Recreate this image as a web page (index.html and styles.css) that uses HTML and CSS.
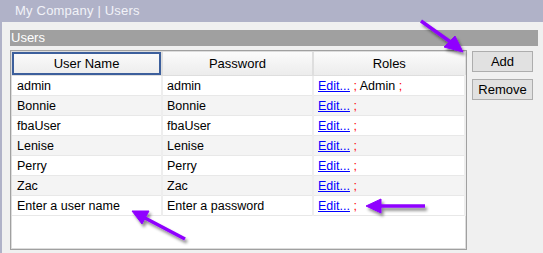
FILE: index.html
```html
<!DOCTYPE html>
<html>
<head>
    <title>My Company | Users</title>
    <link rel="stylesheet" href="styles.css">
</head>
<body>
    <div class="titlebar">My Company | Users</div>
    <div class="main">
        <div class="panel-title">Users</div>
        <div class="content">
            <div class="grid">
                <table>
                    <tr>
                        <th class="selected">User Name</th>
                        <th>Password</th>
                        <th>Roles</th>
                    </tr>
                    <tr>
                        <td>admin</td>
                        <td>admin</td>
                        <td><a href="#">Edit...</a> <span class="sep">;</span> Admin <span class="sep">;</span></td>
                    </tr>
                    <tr class="alt">
                        <td>Bonnie</td>
                        <td>Bonnie</td>
                        <td><a href="#">Edit...</a> <span class="sep">;</span></td>
                    </tr>
                    <tr>
                        <td>fbaUser</td>
                        <td>fbaUser</td>
                        <td><a href="#">Edit...</a> <span class="sep">;</span></td>
                    </tr>
                    <tr class="alt">
                        <td>Lenise</td>
                        <td>Lenise</td>
                        <td><a href="#">Edit...</a> <span class="sep">;</span></td>
                    </tr>
                    <tr>
                        <td>Perry</td>
                        <td>Perry</td>
                        <td><a href="#">Edit...</a> <span class="sep">;</span></td>
                    </tr>
                    <tr class="alt">
                        <td>Zac</td>
                        <td>Zac</td>
                        <td><a href="#">Edit...</a> <span class="sep">;</span></td>
                    </tr>
                    <tr>
                        <td>Enter a user name</td>
                        <td>Enter a password</td>
                        <td><a href="#">Edit...</a> <span class="sep">;</span></td>
                    </tr>
                </table>
            </div>
            <div class="buttons">
                <button>Add</button>
                <button>Remove</button>
            </div>
        </div>
    </div>

    <!-- annotation arrows drawn over the screenshot -->
    <svg class="arrows" width="543" height="253" viewBox="0 0 543 253">
        <defs>
            <filter id="shadow" x="-20%" y="-20%" width="140%" height="140%">
                <feDropShadow dx="2" dy="3" stdDeviation="1.5" flood-color="#000" flood-opacity="0.45"/>
            </filter>
        </defs>
        <g fill="#8f00ff" stroke="#8f00ff" filter="url(#shadow)">
            <line x1="421" y1="21" x2="452" y2="43" stroke-width="3.5"/>
            <polygon points="463,52 444,47 455,36" stroke-width="1"/>

            <line x1="425" y1="206" x2="378" y2="206" stroke-width="3.5"/>
            <polygon points="366,206 381,199 381,213" stroke-width="1"/>

            <line x1="185" y1="239" x2="145" y2="218" stroke-width="3.5"/>
            <polygon points="132,211 149,211 142,224" stroke-width="1"/>
        </g>
    </svg>
</body>
</html>
```

FILE: styles.css
```css
body {
    margin: 0;
    font-family: "Liberation Sans", Arial, sans-serif;
    font-size: 12.5px;
    background-color: #f0f0f0;
    width: 543px;
    height: 253px;
    overflow: hidden;
    position: relative;
}
.titlebar {
    height: 22px;
    line-height: 21px;
    background-color: #b0b2c8;
    color: #f2f2f8;
    font-size: 13px;
    letter-spacing: 0.2px;
    padding-left: 15px;
}
.main {
    border-left: 2px solid #b0b2c8;
    padding: 8px 5px 0 8px;
    height: 223px;
}
.panel-title {
    height: 16px;
    line-height: 16px;
    background-color: #a0a0a0;
    color: #ffffff;
    font-size: 13px;
    padding-left: 1px;
}
.content {
    display: flex;
    gap: 5px;
    margin-top: 4px;
}
.grid {
    width: 454px;
    height: 197px;
    background: #ffffff;
    border: 1px solid #a0a0a0;
    box-shadow: inset 0 0 0 1px #dcdcdc;
    padding: 1px 0 0 1px;
}
table {
    border-collapse: collapse;
    table-layout: fixed;
    width: 454px;
}
th {
    height: 23px;
    font-size: 13px;
    font-weight: normal;
    color: #000;
    background: linear-gradient(#fbfbfb, #ececec);
    border-right: 2px solid #dedede;
    border-bottom: 1px solid #dedede;
    padding: 0;
}
th:nth-child(1) { width: 149px; }
th:nth-child(2) { width: 149px; }
th:last-child { border-right: 1px solid #dedede; }
th.selected {
    box-shadow: inset 0 0 0 2px #3c5f9c;
}
td {
    height: 19px;
    padding: 0 0 0 4px;
    border-right: 2px solid #eeeeee;
    border-bottom: 1px solid #e8e8e8;
    white-space: nowrap;
    overflow: hidden;
}
td:first-child {
    padding-left: 5px;
}
tr.alt td {
    background-color: #f4f4f4;
}
a, a:visited {
    color: #0000ff;
}
.sep {
    color: #ff0000;
}
.buttons {
    display: flex;
    flex-direction: column;
    gap: 7px;
    padding-top: 1px;
}
button {
    width: 61px;
    height: 21px;
    font-family: "Liberation Sans", Arial, sans-serif;
    font-size: 13px;
    color: #000;
    background-color: #e1e1e1;
    border: 1px solid #adadad;
    padding: 0;
}
.arrows {
    position: absolute;
    left: 0;
    top: 0;
    pointer-events: none;
}
```
